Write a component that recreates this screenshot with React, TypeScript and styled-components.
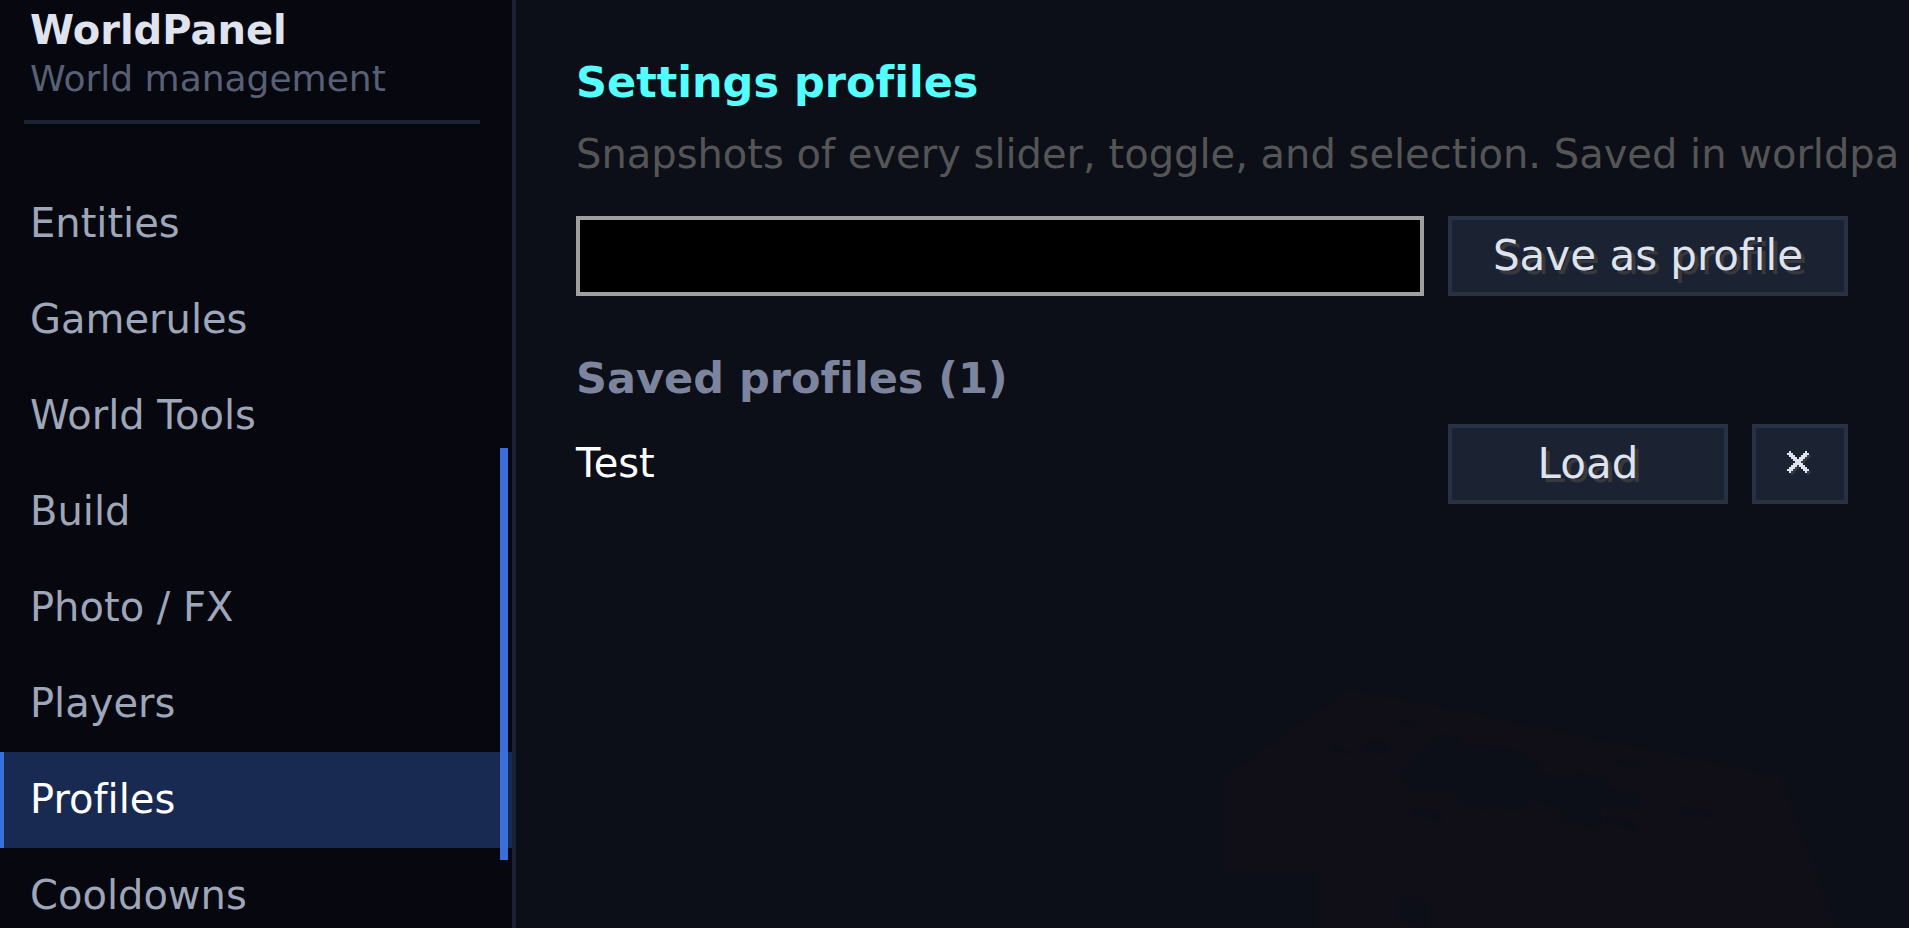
import React, { useState } from "react";
import styled, { createGlobalStyle } from "styled-components";

const GlobalStyle = createGlobalStyle`
  * { box-sizing: border-box; }
  body { margin: 0; background: #0c0f17; overflow: hidden; }
  body, button, input {
    font-family: "DejaVu Sans", Verdana, sans-serif;
    font-variant-ligatures: none;
  }
`;

const Shell = styled.div`
  display: flex;
  height: 100vh;
  overflow: hidden;
`;

const Sidebar = styled.aside`
  position: relative;
  flex: 0 0 516px;
  background: #06070f;
  border-right: 4px solid #1c2232;
`;

const Brand = styled.header`
  margin: 0 32px 52px 24px;
  padding: 6px 8px 16px 6px;
  border-bottom: 4px solid #1c2232;
`;

const BrandName = styled.h1`
  margin: 0;
  font-size: 40px;
  line-height: 48px;
  color: #dfe3ee;
`;

const BrandNote = styled.p`
  margin: 0;
  font-size: 36px;
  line-height: 50px;
  color: #596074;
  white-space: nowrap;
`;

const NavLink = styled.a<{ $active: boolean }>`
  display: flex;
  align-items: center;
  height: 96px;
  padding: 0 28px 2px 26px;
  border-left: 4px solid ${(p) => (p.$active ? "#3a6fdb" : "transparent")};
  background: ${(p) => (p.$active ? "#192a52" : "transparent")};
  color: ${(p) => (p.$active ? "#ffffff" : "#9ea6b8")};
  font-size: 40px;
  text-decoration: none;
  white-space: nowrap;
`;

const ScrollThumb = styled.div`
  position: absolute;
  top: 448px;
  right: 4px;
  width: 8px;
  height: 412px;
  background: #3a6fdb;
`;

const Main = styled.main`
  position: relative;
  flex: 1;
  min-width: 0;
  padding: 56px 61px 0 60px;
  overflow: hidden;
`;

const Backdrop = styled.svg`
  position: absolute;
  right: 0;
  bottom: 0;
  width: 759px;
  height: 308px;
`;

const Content = styled.div`
  position: relative;
`;

const Heading = styled.h2<{ $muted?: boolean }>`
  margin: 0;
  font-size: 43px;
  line-height: 52px;
  color: ${(p) => (p.$muted ? "#7d849e" : "#55ffff")};
  white-space: nowrap;
`;

const Description = styled.p`
  margin: 20px 0 36px;
  font-size: 40px;
  line-height: 52px;
  color: #555555;
  white-space: nowrap;
`;

const Row = styled.div`
  display: flex;
  align-items: center;
  gap: 24px;
`;

const SaveForm = styled(Row).attrs({ as: "form" })`
  margin-bottom: 56px;
`;

const ProfileRow = styled(Row)`
  margin-top: 20px;
`;

const NameInput = styled.input`
  flex: 1;
  min-width: 0;
  height: 80px;
  padding: 0 16px;
  border: 4px solid #a0a0a0;
  border-radius: 0;
  outline: none;
  background: #000000;
  color: #e0e0e0;
  font-size: 40px;
`;

const ProfileName = styled.span`
  flex: 1;
  font-size: 40px;
  line-height: 78px;
  padding-bottom: 2px;
  color: #ffffff;
`;

const Button = styled.button<{ $width: number }>`
  display: flex;
  align-items: center;
  justify-content: center;
  flex: 0 0 ${(p) => p.$width}px;
  height: 80px;
  padding: 0 0 2px;
  border: 4px solid #283245;
  background: #1b2232;
  color: #dfe3ee;
  font-size: 42px;
  text-shadow: 4px 4px 0 #37393e;
  white-space: nowrap;
`;

const Cross = styled.svg`
  flex: none;
  width: 26px;
  height: 26px;
  margin-top: 2px;
`;

const sections = [
  "Entities",
  "Gamerules",
  "World Tools",
  "Build",
  "Photo / FX",
  "Players",
  "Profiles",
  "Cooldowns",
];

const crossCells = [
  [1, 0], [9, 0], [0, 1], [1, 1], [2, 1], [8, 1], [9, 1], [10, 1],
  [1, 2], [2, 2], [3, 2], [7, 2], [8, 2], [9, 2], [2, 3], [3, 3], [4, 3], [6, 3], [7, 3], [8, 3],
  [3, 4], [4, 4], [5, 4], [6, 4], [7, 4], [4, 5], [5, 5], [6, 5],
  [3, 6], [4, 6], [5, 6], [6, 6], [7, 6], [2, 7], [3, 7], [4, 7], [6, 7], [7, 7], [8, 7],
  [1, 8], [2, 8], [3, 8], [7, 8], [8, 8], [9, 8], [0, 9], [1, 9], [2, 9], [8, 9], [9, 9], [10, 9],
  [1, 10], [9, 10],
];

function DeleteIcon() {
  return (
    <Cross viewBox="0 0 13 13" shapeRendering="crispEdges" aria-hidden="true">
      {crossCells.map(([x, y]) => (
        <rect key={`s${x}-${y}`} x={x + 1} y={y + 1} width="1" height="1" fill="#37393e" />
      ))}
      {crossCells.map(([x, y]) => (
        <rect key={`c${x}-${y}`} x={x} y={y} width="1" height="1" fill="#dfe3ee" />
      ))}
    </Cross>
  );
}

export default function App() {
  const [active, setActive] = useState("Profiles");
  const [name, setName] = useState("");

  return (
    <Shell>
      <GlobalStyle />
      <Sidebar>
        <Brand>
          <BrandName>WorldPanel</BrandName>
          <BrandNote>World management</BrandNote>
        </Brand>
        <nav aria-label="Sections">
          {sections.map((label) => (
            <NavLink
              key={label}
              href="#"
              $active={label === active}
              onClick={(e) => {
                e.preventDefault();
                setActive(label);
              }}
            >
              {label}
            </NavLink>
          ))}
        </nav>
        <ScrollThumb />
      </Sidebar>
      <Main>
        <Backdrop viewBox="0 0 759 308" aria-hidden="true">
          <path d="M73 158L199 69L630 156L686 308H166V252H73Z" fill="#100e17" />
          <path
            d="M247 154L265 136L290 113L310 118L312 126L362 128L392 144L388 152L420 158L424 152L455 158L458 168L490 176L490 190L452 184L450 210L412 200L410 186L382 180L372 191L340 188L338 191L310 184L302 172L264 170Z M261 185L294 194V201L261 193Z M528 184L567 194V200L528 192Z M460 138L491 144V148L460 142Z M180 125L205 132V136L180 130Z M215 120L240 122L238 134L212 130Z M245 97L265 101V106L245 101Z M455 194L487 203V211L455 203Z M247 273L279 282V308L247 300Z"
            fill="#0c0f17"
          />
        </Backdrop>
        <Content>
          <Heading>Settings profiles</Heading>
          <Description>
            Snapshots of every slider, toggle, and selection. Saved in worldpa
          </Description>
          <SaveForm onSubmit={(e: React.FormEvent) => e.preventDefault()}>
            <NameInput
              aria-label="Profile name"
              value={name}
              onChange={(e) => setName(e.target.value)}
            />
            <Button type="submit" $width={400}>Save as profile</Button>
          </SaveForm>
          <Heading $muted>Saved profiles (1)</Heading>
          <ProfileRow>
            <ProfileName>Test</ProfileName>
            <Button type="button" $width={280}>Load</Button>
            <Button type="button" $width={96} aria-label="Delete Test">
              <DeleteIcon />
            </Button>
          </ProfileRow>
        </Content>
      </Main>
    </Shell>
  );
}
